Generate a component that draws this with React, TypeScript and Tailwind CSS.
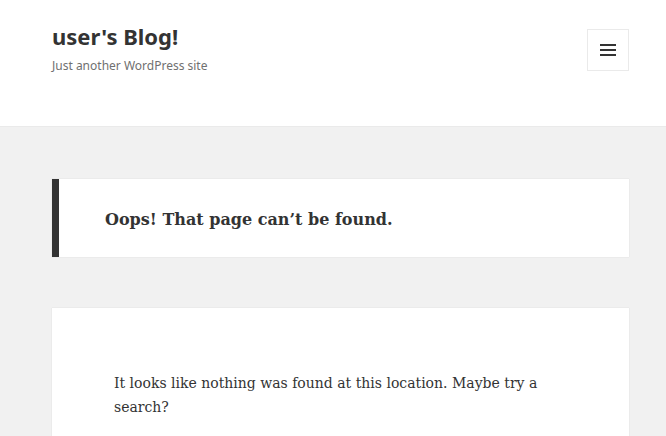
export default function App() {
  return (
    <div className="min-h-[436px] bg-[#f1f1f1]">
      {/* Site header */}
      <header className="flex h-[127px] items-start justify-between border-b border-[#eaeaea] bg-white pl-[52px] pr-[37px]">
        <div className="pt-[22px]">
          <p className="text-[22px] leading-[28px] font-bold text-[#333]" style={{ fontFamily: '"Noto Sans", sans-serif' }}>
            user's Blog!
          </p>
          <p className="mt-[8px] text-[12px] leading-[16px] text-[#707070]" style={{ fontFamily: '"Noto Sans", sans-serif' }}>
            Just another WordPress site
          </p>
        </div>
        <button className="mt-[29px] flex h-[42px] w-[42px] items-center justify-center border border-[#eaeaea] bg-white">
          <span className="flex w-[16px] flex-col gap-[3px]">
            <span className="h-[2px] w-full bg-[#333]" />
            <span className="h-[2px] w-full bg-[#333]" />
            <span className="h-[2px] w-full bg-[#333]" />
          </span>
        </button>
      </header>

      <main className="pl-[52px] pr-[37px] pt-[52px]" style={{ fontFamily: '"DejaVu Serif", serif' }}>
        <div className="flex h-[78px] items-center border-l-[7px] border-[#333] bg-white px-[46px] pt-[3px] shadow-[0_0_1px_rgba(0,0,0,0.15)]">
          <h1 className="text-[16px] font-bold text-[#333]">Oops! That page can’t be found.</h1>
        </div>

        <div className="mt-[51px] h-[140px] bg-white px-[62px] pt-[63px] shadow-[0_0_1px_rgba(0,0,0,0.15)]">
          <p className="text-[14px] leading-[24px] text-[#333]">
            It looks like nothing was found at this location. Maybe try a search?
          </p>
        </div>
      </main>
    </div>
  );
}
